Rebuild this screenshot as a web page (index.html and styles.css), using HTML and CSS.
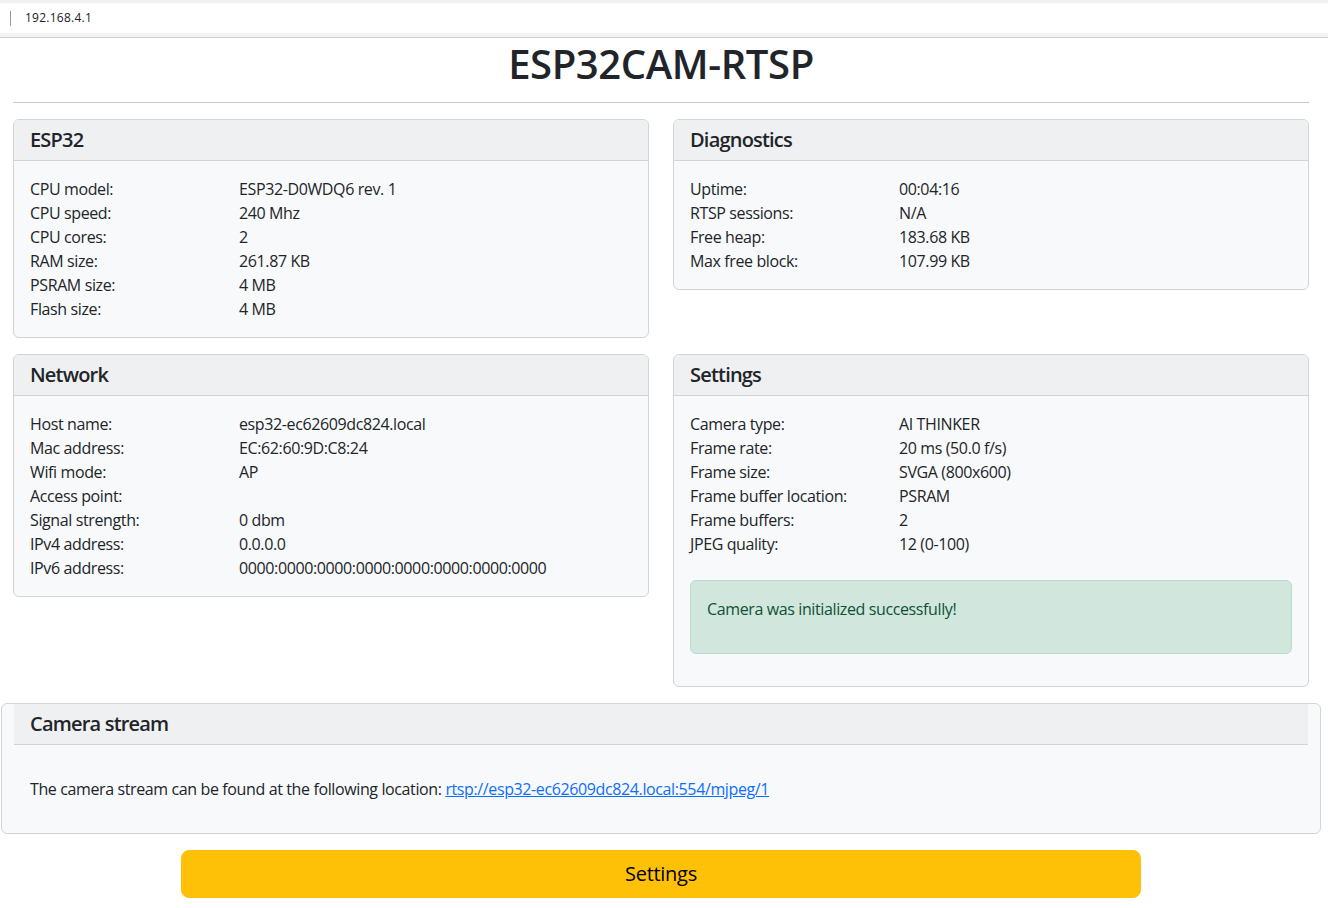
FILE: index.html
```html
<!DOCTYPE html>
<html lang="en">
<head>
<meta charset="utf-8">
<title>ESP32CAM-RTSP</title>
<link rel="stylesheet" href="styles.css">
</head>
<body>
<div class="addressbar">
  <div class="addressbar-inner">
    <span class="caret"></span>
    <span class="url">192.168.4.1</span>
  </div>
</div>
<div class="page">
  <div class="container">
    <h1 class="title">ESP32CAM-RTSP</h1>
    <hr class="rule">
    <div class="grid">
      <section class="card">
        <div class="card-header"><h5>ESP32</h5></div>
        <div class="card-body">
          <dl class="kv">
            <dt>CPU model:</dt><dd>ESP32-D0WDQ6 rev. 1</dd>
            <dt>CPU speed:</dt><dd>240 Mhz</dd>
            <dt>CPU cores:</dt><dd>2</dd>
            <dt>RAM size:</dt><dd>261.87 KB</dd>
            <dt>PSRAM size:</dt><dd>4 MB</dd>
            <dt>Flash size:</dt><dd>4 MB</dd>
          </dl>
        </div>
      </section>
      <section class="card">
        <div class="card-header"><h5>Diagnostics</h5></div>
        <div class="card-body">
          <dl class="kv">
            <dt>Uptime:</dt><dd>00:04:16</dd>
            <dt>RTSP sessions:</dt><dd>N/A</dd>
            <dt>Free heap:</dt><dd>183.68 KB</dd>
            <dt>Max free block:</dt><dd>107.99 KB</dd>
          </dl>
        </div>
      </section>
      <section class="card">
        <div class="card-header"><h5>Network</h5></div>
        <div class="card-body">
          <dl class="kv">
            <dt>Host name:</dt><dd>esp32-ec62609dc824.local</dd>
            <dt>Mac address:</dt><dd>EC:62:60:9D:C8:24</dd>
            <dt>Wifi mode:</dt><dd>AP</dd>
            <dt>Access point:</dt><dd></dd>
            <dt>Signal strength:</dt><dd>0 dbm</dd>
            <dt>IPv4 address:</dt><dd>0.0.0.0</dd>
            <dt>IPv6 address:</dt><dd>0000:0000:0000:0000:0000:0000:0000:0000</dd>
          </dl>
        </div>
      </section>
      <section class="card">
        <div class="card-header"><h5>Settings</h5></div>
        <div class="card-body">
          <dl class="kv">
            <dt>Camera type:</dt><dd>AI THINKER</dd>
            <dt>Frame rate:</dt><dd>20 ms (50.0 f/s)</dd>
            <dt>Frame size:</dt><dd>SVGA (800x600)</dd>
            <dt>Frame buffer location:</dt><dd>PSRAM</dd>
            <dt>Frame buffers:</dt><dd>2</dd>
            <dt>JPEG quality:</dt><dd>12 (0-100)</dd>
          </dl>
          <div class="alert"><p>Camera was initialized successfully!</p></div>
        </div>
      </section>
    </div>
    <section class="card card-wide">
      <div class="card-wide-inner">
        <div class="card-header"><h5>Camera stream</h5></div>
        <div class="card-body">
          <p class="stream-text">The camera stream can be found at the following location: <a href="#">rtsp://esp32-ec62609dc824.local:554/mjpeg/1</a></p>
        </div>
      </div>
    </section>
    <div class="actions">
      <a class="btn" href="#">Settings</a>
    </div>
  </div>
</div>
</body>
</html>
```
FILE: styles.css
```css
* { box-sizing: border-box; }
html, body { margin: 0; padding: 0; background: #fff; }
body {
  font-family: "Open Sans", "Noto Sans", "Liberation Sans", sans-serif;
  font-size: 16px;
  line-height: 24px;
  color: #212529;
  letter-spacing: -0.38px;
}
.addressbar {
  border-top: 3px solid #f1f1f1;
  border-bottom: 4px solid #f3f3f3;
  box-shadow: 0 1px 0 #cfcfcf;
}
.addressbar-inner {
  height: 30px;
  display: flex;
  align-items: center;
  background: #fff;
  padding-left: 10px;
}
.caret {
  width: 1px;
  height: 15px;
  background: #9a9a9a;
  margin-right: 14px;
}
.url {
  font-size: 12px;
  color: #202124;
  letter-spacing: 0.25px;
}
.page { width: 1322px; margin-top: 1px; }
.container { padding: 0 13px; }
.title {
  margin: 3px 0 0;
  font-size: 40px;
  line-height: 48px;
  font-weight: 600;
  text-align: center;
  letter-spacing: -0.4px;
}
.rule {
  margin: 14px 0 16px;
  border: 0;
  border-top: 1px solid #c8c9ca;
  height: 0;
}
.grid {
  display: grid;
  grid-template-columns: 636px 636px;
  column-gap: 24px;
  row-gap: 16px;
  align-items: start;
}
.card {
  background: #f8f9fa;
  border: 1px solid #d3d4d5;
  border-radius: 6px;
  overflow: hidden;
}
.card-header {
  background: #eff0f1;
  border-bottom: 1px solid #d3d4d5;
  padding: 8px 16px;
}
.card-header h5 {
  margin: 0;
  font-size: 20px;
  line-height: 24px;
  font-weight: 600;
  letter-spacing: -0.8px;
}
.card-body { padding: 16px; }
.kv {
  display: grid;
  grid-template-columns: 209px 1fr;
  margin: 0;
}
.kv dt, .kv dd { margin: 0; min-height: 24px; }
.kv dt { font-weight: 400; }
.alert {
  margin: 24px 0 16px;
  padding: 16px;
  background: #d1e7dd;
  border: 1px solid #badbcc;
  border-radius: 6px;
  color: #0f5132;
}
.alert p { margin: 0 0 16px; }
.card-wide {
  margin: 16px -12px 0;
}
.card-wide-inner { padding: 0 12px; }
.card-wide .card-header { border-radius: 0; }
.stream-text { margin: 16px 0; }
.stream-text a { color: #0d6efd; text-decoration: underline; }
.actions {
  display: flex;
  justify-content: center;
  margin-top: 16px;
}
.btn {
  display: block;
  width: 960px;
  padding: 8px 16px 8px;
  font-size: 20px;
  line-height: 30px;
  text-align: center;
  background: #ffc107;
  border: 1px solid #ffc107;
  border-radius: 8px;
  color: #000;
  text-decoration: none;
  letter-spacing: -0.3px;
}
```
